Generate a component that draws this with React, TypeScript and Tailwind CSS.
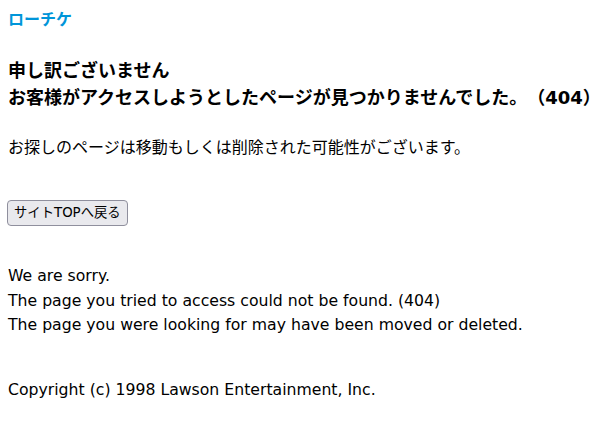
export default function App() {
  const font = { fontFamily: '"DejaVu Sans", "Noto Sans CJK JP", sans-serif' };
  return (
    <div className="min-h-[427px] bg-white px-2 pt-2 text-black" style={font}>
      <div className="text-[16px] leading-[24px] font-bold text-[#0095d9]">ローチケ</div>
      <h1 className="mt-[25px] text-[18px] leading-[27px] font-bold [text-spacing-trim:space-all]">
        申し訳ございません
        <br />
        お客様がアクセスしようとしたページが見つかりませんでした。（404）
      </h1>
      <p className="mt-[25px] text-[16px] leading-[24px]">
        お探しのページは移動もしくは削除された可能性がございます。
      </p>
      <div className="mt-[40px]">
        <button className="ml-[-1px] h-[26px] rounded-[4px] border border-[#8f8f9d] bg-[#e9e9ed] px-[6px] text-[13.33px] leading-none text-black">
          サイトTOPへ戻る
        </button>
      </div>
      <p className="mt-[38px] text-[15.7px] leading-[24.5px]">
        We are sorry.
        <br />
        The page you tried to access could not be found. (404)
        <br />
        The page you were looking for may have been moved or deleted.
      </p>
      <p className="mt-[40px] text-[15.7px] leading-[24px]">
        Copyright (c) 1998 Lawson Entertainment, Inc.
      </p>
    </div>
  );
}
